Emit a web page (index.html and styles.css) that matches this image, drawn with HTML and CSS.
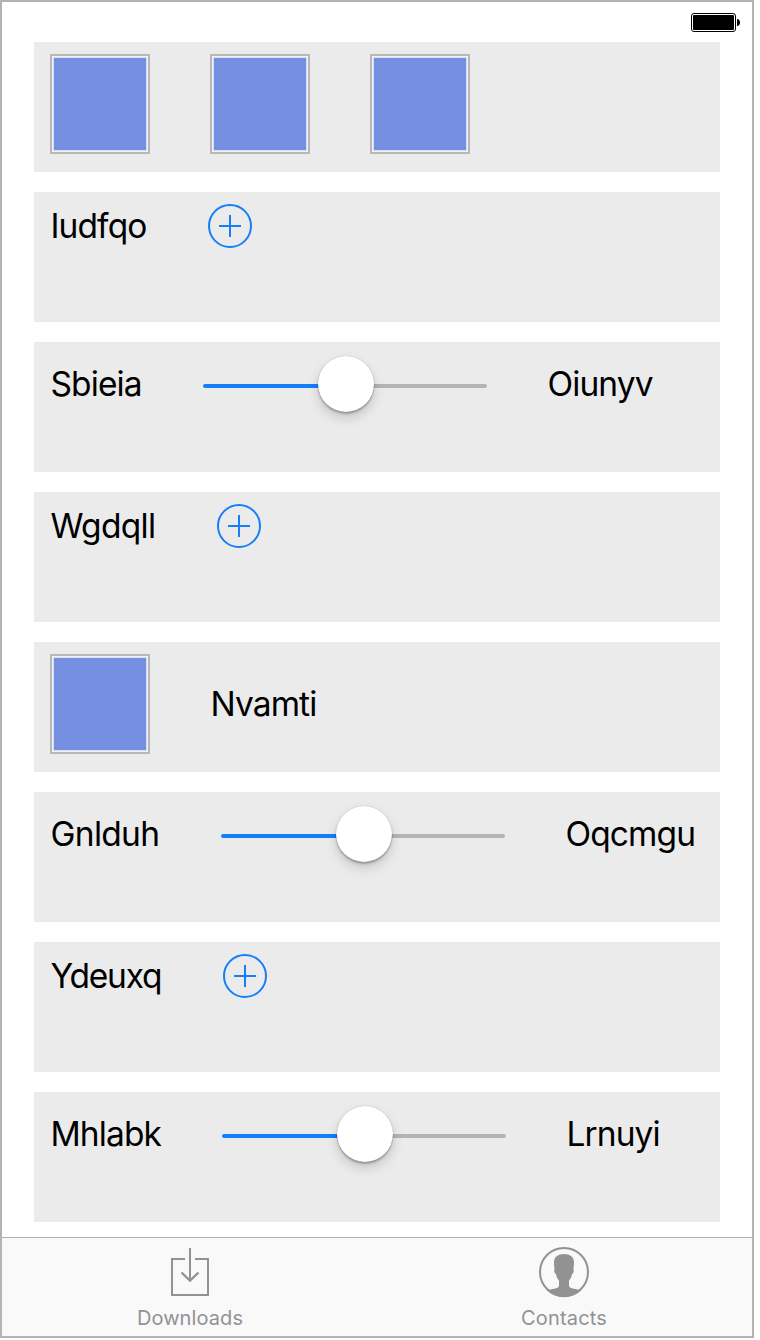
FILE: index.html
```
<!DOCTYPE html>
<html lang="en">
<head>
<meta charset="utf-8">
<title>Downloads</title>
<link rel="stylesheet" href="styles.css">
</head>
<body>
<div class="phone">
  <header class="status">
    <svg class="battery" width="50" height="20" viewBox="0 0 50 20">
      <rect x=".5" y=".5" width="44" height="18" rx="2.5" fill="#fff" stroke="#000"/>
      <rect x="2" y="2" width="41" height="15" rx="1" fill="#000"/>
      <path d="M46 6c4 0 4 7 0 7z" fill="#000"/>
    </svg>
  </header>
  <main class="list">
    <section class="row"><i class="tile"></i><i class="tile"></i><i class="tile"></i></section>
    <section class="row">
      <span class="label w98">Iudfqo</span>
      <svg class="add" width="44" height="44"><circle cx="22" cy="22" r="21"/><path d="M11 22h22M22 11v22"/></svg>
    </section>
    <section class="row">
      <span class="label mid w93">Sbieia</span>
      <div class="slider"><i class="knob"></i></div>
      <span class="label mid">Oiunyv</span>
    </section>
    <section class="row">
      <span class="label w107">Wgdqll</span>
      <svg class="add" width="44" height="44"><circle cx="22" cy="22" r="21"/><path d="M11 22h22M22 11v22"/></svg>
    </section>
    <section class="row"><i class="tile"></i><span class="label tall">Nvamti</span></section>
    <section class="row">
      <span class="label mid w111">Gnlduh</span>
      <div class="slider"><i class="knob"></i></div>
      <span class="label mid">Oqcmgu</span>
    </section>
    <section class="row">
      <span class="label w113">Ydeuxq</span>
      <svg class="add" width="44" height="44"><circle cx="22" cy="22" r="21"/><path d="M11 22h22M22 11v22"/></svg>
    </section>
    <section class="row">
      <span class="label mid w112">Mhlabk</span>
      <div class="slider"><i class="knob"></i></div>
      <span class="label mid">Lrnuyi</span>
    </section>
  </main>
  <nav class="tabs">
    <a class="tab">
      <svg width="52" height="52" viewBox="0 0 52 52" fill="none" stroke="#929292" stroke-width="2">
        <path d="M21 13H8v36h36V13H31M26 2v33"/><path d="M17.500 26.500l8.500 8 8.500-8" stroke-width="2.4"/>
      </svg>
      <span>Downloads</span>
    </a>
    <a class="tab contacts">
      <svg width="52" height="52" viewBox="0 0 52 52">
        <circle cx="26" cy="26" r="24" fill="none" stroke="#929292" stroke-width="2"/>
        <path d="M26 8c-6 0-10 3-10 8 0 3 .3 5 .5 7-.8 1.500 0 4.500 1.400 5 .5 3 1.600 5 3.100 6.500V40c-.5 3-8 2.500-12 4.500a25 25 0 0 0 34 0C39 42.500 31.500 43 31 40v-5.500c1.500-1.500 2.600-3.500 3.100-6.500 1.400-.5 2.200-3.500 1.400-5 .2-2 .5-4 .5-7 0-5-4-8-10-8z" fill="#929292"/>
      </svg>
      <span>Contacts</span>
    </a>
  </nav>
</div>
</body>
</html>
```
FILE: styles.css
```
* { box-sizing: border-box; }
body { margin: 0; background: #fff; font-family: Inter, "Liberation Sans", sans-serif; }
.phone { width: 754px; height: 1338px; border: 2px solid #b3b3b3; display: flex; flex-direction: column; }
.status { height: 40px; padding: 11px 11px 0 0; display: flex; justify-content: flex-end; }
.battery { display: block; }
.list { flex: 1; padding: 0 32px; display: flex; flex-direction: column; gap: 20px; }
.row { height: 130px; background: #ebebeb; padding: 12px 16px; display: flex; align-items: flex-start; gap: 60px; }
.tile { flex: none; width: 100px; height: 100px; border: 2px solid #b8b8b8; padding: 1px; background: #758fe3 content-box; box-shadow: inset 0 0 0 1.5px #f0f1f5, inset 0 0 0 2px #c3cdf0; }
.label { flex: none; padding-left: .5px; font-size: 33.5px; line-height: 44px; letter-spacing: -.9px; color: #000; white-space: nowrap; }
.mid { line-height: 60px; }
.tall { line-height: 100px; }
.w93 { width: 93px; }
.w98 { width: 98px; }
.w107 { width: 107px; letter-spacing: -.7px; }
.w111 { width: 111px; letter-spacing: -.7px; }
.w112 { width: 112px; }
.w113 { width: 113px; letter-spacing: -1.2px; }
.add { flex: none; fill: none; stroke: #147efb; stroke-width: 2; }
.slider { flex: none; width: 284px; height: 4px; margin-top: 30px; border-radius: 2px; background: linear-gradient(90deg, #147efb 50%, #b4b4b4 50%); display: flex; align-items: center; justify-content: center; }
.knob { flex: none; width: 56px; height: 56px; margin: -4px 0 0 2px; border-radius: 50%; background: #fff; box-shadow: 0 0 1px rgba(0,0,0,.3), 0 2px 2px rgba(0,0,0,.25), 0 6px 12px rgba(0,0,0,.16); }
.tabs { height: 99px; border-top: 1px solid #b0b0b0; background: #f9f9f9; display: flex; }
.tab { width: 376px; padding-top: 8px; display: flex; flex-direction: column; align-items: center; color: #929292; font-size: 20px; line-height: 24px; letter-spacing: .1px; }
.contacts { width: 372px; letter-spacing: .2px; }
.tab span { margin-top: 8px; }
```
